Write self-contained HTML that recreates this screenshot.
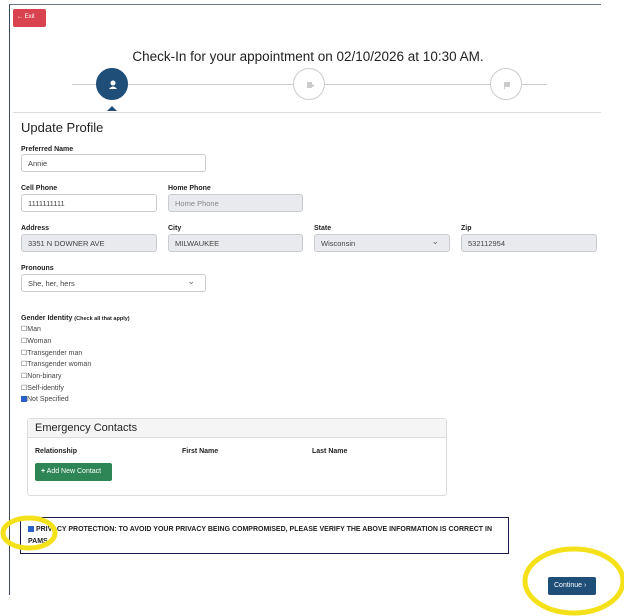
<!DOCTYPE html>
<html><head><style>
*{box-sizing:border-box;margin:0;padding:0}
body{width:624px;height:616px;background:#fff;font-family:"Liberation Sans",sans-serif;position:relative;overflow:hidden;color:#222}
.a{position:absolute}
.card{left:9px;top:4px;width:592px;height:591px;border-left:1.5px solid #3a4a5c;border-top:1.5px solid #6a7a8a}
.lbl{font-size:7px;font-weight:bold;color:#222}
.in{height:18px;border:1px solid #c8ccd0;border-radius:3px;font-size:7.5px;color:#444;padding:4px 6px;background:#fff}
.dis{background:#e8eaed}
.sel:after{content:"⌄";position:absolute;right:10px;top:1px;font-size:9px;color:#666}
.opt{font-size:7px;color:#444;left:21px}
.circ{width:32px;height:32px;border-radius:50%;border:1px solid #ccc;background:#fff}
</style></head><body>
<div class="a card"></div>
<div class="a" style="left:13px;top:9px;width:33px;height:18px;background:#d9434f;border-radius:2px;color:#fff;font-size:6px;padding:5px 4px">← Exit</div>
<div class="a" style="left:0;width:616px;top:49px;text-align:center;font-size:13.5px;color:#222">Check-In for your appointment on 02/10/2026 at 10:30 AM.</div>
<div class="a" style="left:72px;top:84px;width:475px;height:1px;background:#ccc"></div>
<div class="a circ" style="left:96px;top:68px;background:#1f4e79;border-color:#1f4e79"><svg width="32" height="32"><circle cx="16" cy="14" r="2.5" fill="#fff"/><path d="M12 20 q4-5 8 0z" fill="#fff"/></svg></div>
<div class="a circ" style="left:293px;top:68px"><svg width="32" height="32"><rect x="13" y="13" width="5" height="6" fill="#ccc"/><path d="M18 15 l3 1.5 -3 1.5z" fill="#ccc"/></svg></div>
<div class="a circ" style="left:490px;top:68px"><svg width="32" height="32"><rect x="13" y="13" width="6" height="5" fill="#ccc"/><rect x="13" y="13" width="1" height="7" fill="#ccc"/></svg></div>
<div class="a" style="left:107px;top:106px;border-left:5px solid transparent;border-right:5px solid transparent;border-bottom:5px solid #1f4e79"></div>
<div class="a" style="left:13px;top:112px;width:588px;height:1px;background:#ddd"></div>
<div class="a" style="left:21px;top:120px;font-size:13px;color:#222">Update Profile</div>

<div class="a lbl" style="left:21px;top:146px">Preferred Name</div>
<div class="a in" style="left:21px;top:154px;width:185px">Annie</div>
<div class="a lbl" style="left:21px;top:185px">Cell Phone</div>
<div class="a in" style="left:21px;top:194px;width:136px">1111111111</div>
<div class="a lbl" style="left:168px;top:185px">Home Phone</div>
<div class="a in dis" style="left:168px;top:194px;width:135px;color:#888">Home Phone</div>
<div class="a lbl" style="left:21px;top:225px">Address</div>
<div class="a in dis" style="left:21px;top:234px;width:136px">3351 N DOWNER AVE</div>
<div class="a lbl" style="left:168px;top:225px">City</div>
<div class="a in dis" style="left:168px;top:234px;width:135px">MILWAUKEE</div>
<div class="a lbl" style="left:314px;top:225px">State</div>
<div class="a in dis sel" style="left:314px;top:234px;width:136px">Wisconsin</div>
<div class="a lbl" style="left:461px;top:225px">Zip</div>
<div class="a in dis" style="left:461px;top:234px;width:136px">532112954</div>
<div class="a lbl" style="left:21px;top:265px">Pronouns</div>
<div class="a in sel" style="left:21px;top:274px;width:185px">She, her, hers</div>

<div class="a lbl" style="left:21px;top:315px">Gender Identity <span style="font-size:5.5px">(Check all that apply)</span></div>
<div class="a opt" style="top:325px">☐Man</div>
<div class="a opt" style="top:337px">☐Woman</div>
<div class="a opt" style="top:349px">☐Transgender man</div>
<div class="a opt" style="top:360px">☐Transgender woman</div>
<div class="a opt" style="top:372px">☐Non-binary</div>
<div class="a opt" style="top:384px">☐Self-identify</div>
<div class="a opt" style="top:396px"><span style="display:inline-block;width:6px;height:6px;background:#2a62c9;vertical-align:-1px"></span>Not Specified</div>

<div class="a" style="left:27px;top:418px;width:420px;height:78px;border:1px solid #ddd;border-radius:3px"></div>
<div class="a" style="left:28px;top:419px;width:418px;height:19px;background:#f5f5f5;border-bottom:1px solid #ddd;font-size:11px;padding:3px 7px">Emergency Contacts</div>
<div class="a lbl" style="left:35px;top:448px">Relationship</div>
<div class="a lbl" style="left:182px;top:448px">First Name</div>
<div class="a lbl" style="left:312px;top:448px">Last Name</div>
<div class="a" style="left:35px;top:463px;width:77px;height:18px;background:#2e8656;border-radius:2px;color:#fff;font-size:7px;padding:5px 6px"><b>+</b> Add New Contact</div>

<div class="a" style="left:20px;top:517px;width:489px;height:37px;border:1px solid #1a1a4a"></div>
<div class="a" style="left:28px;top:524px;width:470px;font-size:7px;font-weight:bold;line-height:12px;color:#222"><span style="display:inline-block;width:6px;height:6px;background:#2a62c9;vertical-align:-1px"></span> PRIVACY PROTECTION: TO AVOID YOUR PRIVACY BEING COMPROMISED, PLEASE VERIFY THE ABOVE INFORMATION IS CORRECT IN PAMS.</div>
<div class="a" style="left:548px;top:577px;width:48px;height:18px;background:#1f4e79;border-radius:2px;color:#fff;font-size:7px;padding:5px 6px">Continue ›</div>
<svg class="a" style="left:0;top:0" width="624" height="616"><ellipse cx="29" cy="533" rx="26" ry="15" fill="none" stroke="#f5e11a" stroke-width="5"/><ellipse cx="574" cy="581" rx="49" ry="32" fill="none" stroke="#f5e11a" stroke-width="5"/></svg>
</body></html>
